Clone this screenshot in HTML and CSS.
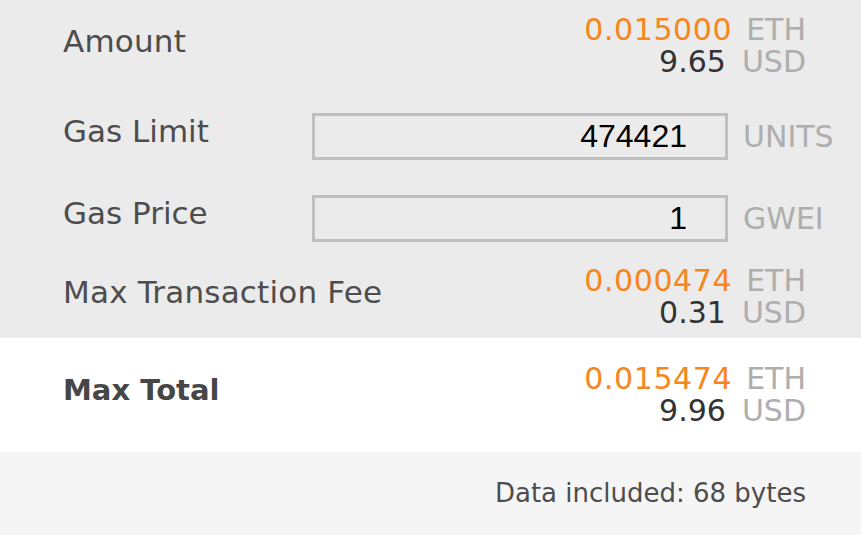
FILE: index.html
```html
<!DOCTYPE html>
<html lang="en">
<head>
  <meta charset="UTF-8" />
  <meta name="viewport" content="width=device-width, initial-scale=1.0" />
  <title>Confirm Transaction</title>
  <link rel="stylesheet" href="styles.css">
</head>
<body>
  <div class="panel">
    <div class="row row-amount">
      <div class="label">Amount</div>
      <div class="values">
        <div class="line"><span class="eth">0.015000</span><span class="unit">ETH</span></div>
        <div class="line"><span class="fiat">9.65</span><span class="unit">USD</span></div>
      </div>
    </div>

    <div class="row row-limit">
      <div class="label label-fixed">Gas Limit</div>
      <input class="field" type="text" value="474421">
      <span class="field-unit">UNITS</span>
    </div>

    <div class="row row-price">
      <div class="label label-fixed">Gas Price</div>
      <input class="field" type="text" value="1">
      <span class="field-unit">GWEI</span>
    </div>

    <div class="row row-fee">
      <div class="label">Max Transaction Fee</div>
      <div class="values">
        <div class="line"><span class="eth">0.000474</span><span class="unit">ETH</span></div>
        <div class="line"><span class="fiat">0.31</span><span class="unit">USD</span></div>
      </div>
    </div>
  </div>

  <div class="row total">
    <div class="label label-bold">Max Total</div>
    <div class="values">
      <div class="line"><span class="eth">0.015474</span><span class="unit">ETH</span></div>
      <div class="line"><span class="fiat">9.96</span><span class="unit">USD</span></div>
    </div>
  </div>

  <div class="footer">Data included: 68 bytes</div>
</body>
</html>
```

FILE: styles.css
```css
body {
  font-family: 'DejaVu Sans', 'Open Sans', sans-serif;
  margin: 0;
  background-color: #fff;
  color: #4d4d4d;
}

.panel {
  background-color: #ebebeb;
}

.row {
  display: flex;
  align-items: center;
  padding: 0 55px 0 63px;
}

.row > * {
  flex: none;
}

.row-amount { height: 92px; }
.row-limit { height: 88px; }
.row-price { height: 76px; }
.row-fee { height: 82px; }

.label {
  font-size: 31px;
  line-height: 36px;
  letter-spacing: 0.2px;
  padding-bottom: 10px;
  color: #4d4d4d;
}

.label-fixed {
  width: 249px;
  letter-spacing: 0;
}

.label-bold {
  font-size: 29px;
  font-weight: bold;
  letter-spacing: 0;
  color: #464646;
}

.values {
  margin-left: auto;
  font-size: 30px;
  line-height: 32px;
}

.line {
  display: flex;
  justify-content: flex-end;
}

.eth {
  color: #f7861c;
  letter-spacing: 0.6px;
}

.fiat {
  color: #333;
  margin-right: 2px;
}

.unit {
  margin-left: 14px;
  color: #aeaeae;
}

.field {
  box-sizing: border-box;
  width: 416px;
  height: 47px;
  padding: 0 38px 0 0;
  border: 3px solid #bfbfbf;
  background: transparent;
  font-family: 'Liberation Sans', Arial, sans-serif;
  font-size: 32px;
  text-align: right;
  color: #000;
}

.field-unit {
  margin-left: 15px;
  font-size: 30px;
  color: #aeaeae;
}

.total {
  height: 114px;
  background-color: #fff;
}

.footer {
  height: 83px;
  box-sizing: border-box;
  padding: 26px 55px 0 0;
  background-color: #f5f5f5;
  text-align: right;
  font-size: 26px;
  color: #4d4d4d;
}
```
